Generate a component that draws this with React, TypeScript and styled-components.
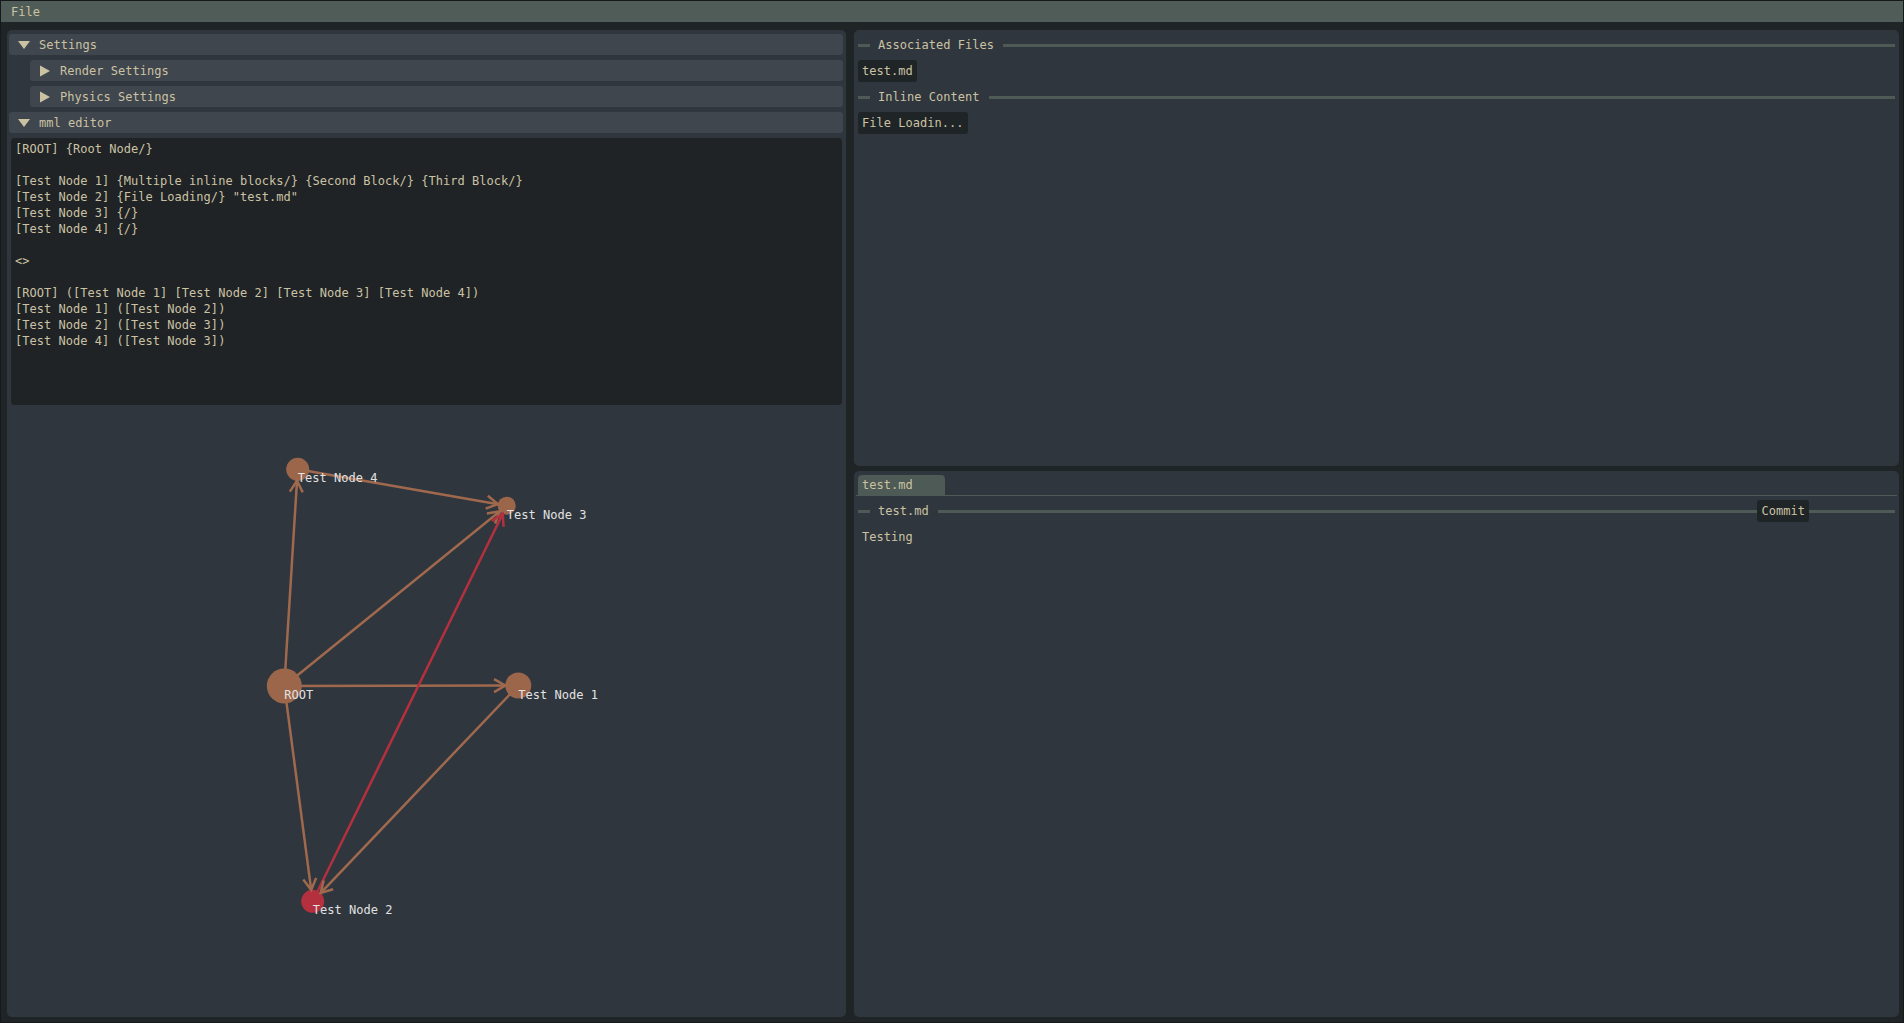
import styled, { createGlobalStyle } from "styled-components";

const BROWN = "#9c664b";
const EDGE = "#a0694e";
const RED = "#b5303f";

const GlobalStyle = createGlobalStyle`
  html, body {
    margin: 0;
    padding: 0;
    background: #1f2427;
  }
  body {
    font-family: "DejaVu Sans Mono", "Liberation Mono", monospace;
    font-size: 12px;
    letter-spacing: 0.03px;
    color: #cbc2a4;
  }
`;

const Screen = styled.div`
  width: 1904px;
  height: 1023px;
  box-sizing: border-box;
  border: 1px solid #15191b;
  background: #1f2427;
  display: flex;
  flex-direction: column;
  overflow: hidden;
`;

const MenuBar = styled.div`
  height: 21px;
  flex-shrink: 0;
  background: #505c57;
  display: flex;
  align-items: center;
  padding-left: 10px;
`;

const Workspace = styled.div`
  flex: 1;
  min-height: 0;
  display: grid;
  grid-template-columns: 839px 1045px;
  column-gap: 8px;
  padding: 8px 4px 5px 6px;
`;

const Panel = styled.div`
  background: #2f363d;
  border-radius: 5px;
  display: flex;
  flex-direction: column;
  min-height: 0;
`;

const LeftPanel = styled(Panel)`
  padding: 4px 3px 0 2px;
  gap: 5px;
`;

const RightColumn = styled.div`
  display: flex;
  flex-direction: column;
  gap: 5px;
  min-height: 0;
`;

const TopPanel = styled(Panel)`
  height: 436px;
  flex-shrink: 0;
  box-sizing: border-box;
  padding: 4px 4px 3px;
  gap: 4px;
`;

const BottomPanel = styled(Panel)`
  flex: 1;
  padding: 4px 2px 0;
`;

const Header = styled.div<{ $indent?: boolean }>`
  height: 21px;
  flex-shrink: 0;
  margin-left: ${(p) => (p.$indent ? "21px" : "0")};
  background: #3f464d;
  border-radius: 3px;
  display: flex;
  align-items: center;
  padding-left: 9px;
  gap: 9px;
`;

const Editor = styled.div`
  height: 267px;
  flex-shrink: 0;
  margin: 0 1px 0 2px;
  box-sizing: border-box;
  background: #1f2326;
  border-radius: 4px;
  padding: 3px 4px;
  white-space: pre;
  line-height: 16px;
`;

const Graph = styled.div`
  flex: 1;
  margin: -2px -3px 0 -2px;
  position: relative;

  svg {
    display: block;
    width: 100%;
    height: 100%;
  }
`;

const SepRow = styled.div`
  height: 22px;
  flex-shrink: 0;
  display: flex;
  align-items: center;
`;

const SepLine = styled.div<{ $w?: number }>`
  height: 3px;
  background: #4e5a55;
  flex: ${(p) => (p.$w ? `0 0 ${p.$w}px` : "1")};
`;

const SepLabel = styled.span`
  margin: 0 9px 0 8px;
  white-space: nowrap;
`;

const Chip = styled.div`
  height: 22px;
  flex-shrink: 0;
  align-self: flex-start;
  display: flex;
  align-items: center;
  padding: 0 4px;
  background: #1f2427;
  border-radius: 3px;
  white-space: nowrap;
`;

const TabBar = styled.div`
  display: flex;
  border-bottom: 1px solid #4e5a55;
  padding-left: 2px;
`;

const Tab = styled.div`
  width: 87px;
  height: 20px;
  box-sizing: border-box;
  padding-left: 4px;
  display: flex;
  align-items: center;
  background: #4e5a55;
  border-radius: 4px 4px 0 0;
`;

const TabBody = styled.div`
  display: flex;
  flex-direction: column;
  gap: 4px;
  padding: 4px 2px 0;
`;

const PlainText = styled.div`
  height: 22px;
  display: flex;
  align-items: center;
  padding-left: 4px;
`;

function Caret({ open }: { open?: boolean }) {
  return (
    <svg width="12" height="12" viewBox="0 0 12 12">
      {open ? (
        <polygon points="0,2 12,2 6,10" fill="#cbc2a4" />
      ) : (
        <polygon points="1,0.5 11,6 1,11.5" fill="#cbc2a4" />
      )}
    </svg>
  );
}

const editorText = `[ROOT] {Root Node/}

[Test Node 1] {Multiple inline blocks/} {Second Block/} {Third Block/}
[Test Node 2] {File Loading/} "test.md"
[Test Node 3] {/}
[Test Node 4] {/}

<>

[ROOT] ([Test Node 1] [Test Node 2] [Test Node 3] [Test Node 4])
[Test Node 1] ([Test Node 2])
[Test Node 2] ([Test Node 3])
[Test Node 4] ([Test Node 3])`;

type GNode = { x: number; y: number; r: number; label: string; color: string };

const nodes: Record<string, GNode> = {
  root: { x: 277.3, y: 278, r: 17.5, label: "ROOT", color: BROWN },
  n1: { x: 511.3, y: 277.5, r: 13, label: "Test Node 1", color: BROWN },
  n2: { x: 305.7, y: 493.3, r: 11.5, label: "Test Node 2", color: RED },
  n3: { x: 499.7, y: 97.7, r: 9, label: "Test Node 3", color: BROWN },
  n4: { x: 290.7, y: 61.3, r: 11.5, label: "Test Node 4", color: BROWN },
};

const edges: [string, string, string][] = [
  ["root", "n1", EDGE],
  ["root", "n2", EDGE],
  ["root", "n3", EDGE],
  ["root", "n4", EDGE],
  ["n1", "n2", EDGE],
  ["n4", "n3", EDGE],
  ["n2", "n3", RED],
];

// open chevron sitting on the target node's rim
function arrowPoints(a: GNode, b: GNode) {
  const dx = b.x - a.x;
  const dy = b.y - a.y;
  const len = Math.hypot(dx, dy);
  const ux = dx / len;
  const uy = dy / len;
  const tx = b.x - ux * b.r;
  const ty = b.y - uy * b.r;
  const arm = 13;
  const ang = (30 * Math.PI) / 180;
  const rot = (s: number) => {
    const c = Math.cos(s * ang);
    const n = Math.sin(s * ang);
    return [tx - (ux * c - uy * n) * arm, ty - (ux * n + uy * c) * arm];
  };
  const [x1, y1] = rot(1);
  const [x2, y2] = rot(-1);
  return `${x1},${y1} ${tx},${ty} ${x2},${y2}`;
}

function NodeGraph() {
  return (
    <Graph>
      <svg>
        {edges.map(([f, t, c]) => (
          <line
            key={f + t}
            x1={nodes[f].x}
            y1={nodes[f].y}
            x2={nodes[t].x}
            y2={nodes[t].y}
            stroke={c}
            strokeWidth={2.5}
          />
        ))}
        {Object.entries(nodes).map(([k, n]) => (
          <circle key={k} cx={n.x} cy={n.y} r={n.r} fill={n.color} />
        ))}
        {edges.map(([f, t, c]) => (
          <polyline
            key={"a" + f + t}
            points={arrowPoints(nodes[f], nodes[t])}
            fill="none"
            stroke={c}
            strokeWidth={2.5}
          />
        ))}
        {Object.entries(nodes).map(([k, n]) => (
          <text
            key={"t" + k}
            x={n.x}
            y={n.y + 13}
            fill="#e2e2e2"
            fontSize="12"
            fontFamily='"DejaVu Sans Mono", monospace'
          >
            {n.label}
          </text>
        ))}
      </svg>
    </Graph>
  );
}

export default function App() {
  return (
    <>
      <GlobalStyle />
      <Screen>
        <MenuBar>File</MenuBar>
        <Workspace>
          <LeftPanel>
            <Header>
              <Caret open />
              Settings
            </Header>
            <Header $indent>
              <Caret />
              Render Settings
            </Header>
            <Header $indent>
              <Caret />
              Physics Settings
            </Header>
            <Header>
              <Caret open />
              mml editor
            </Header>
            <Editor>{editorText}</Editor>
            <NodeGraph />
          </LeftPanel>

          <RightColumn>
            <TopPanel>
              <SepRow>
                <SepLine $w={12} />
                <SepLabel>Associated Files</SepLabel>
                <SepLine />
              </SepRow>
              <Chip>test.md</Chip>
              <SepRow>
                <SepLine $w={12} />
                <SepLabel>Inline Content</SepLabel>
                <SepLine />
              </SepRow>
              <Chip>File Loadin...</Chip>
            </TopPanel>

            <BottomPanel>
              <TabBar>
                <Tab>test.md</Tab>
              </TabBar>
              <TabBody>
                <SepRow>
                  <SepLine $w={12} />
                  <SepLabel>test.md</SepLabel>
                  <SepLine />
                  <Chip>Commit</Chip>
                  <SepLine $w={86} />
                </SepRow>
                <PlainText>Testing</PlainText>
              </TabBody>
            </BottomPanel>
          </RightColumn>
        </Workspace>
      </Screen>
    </>
  );
}
